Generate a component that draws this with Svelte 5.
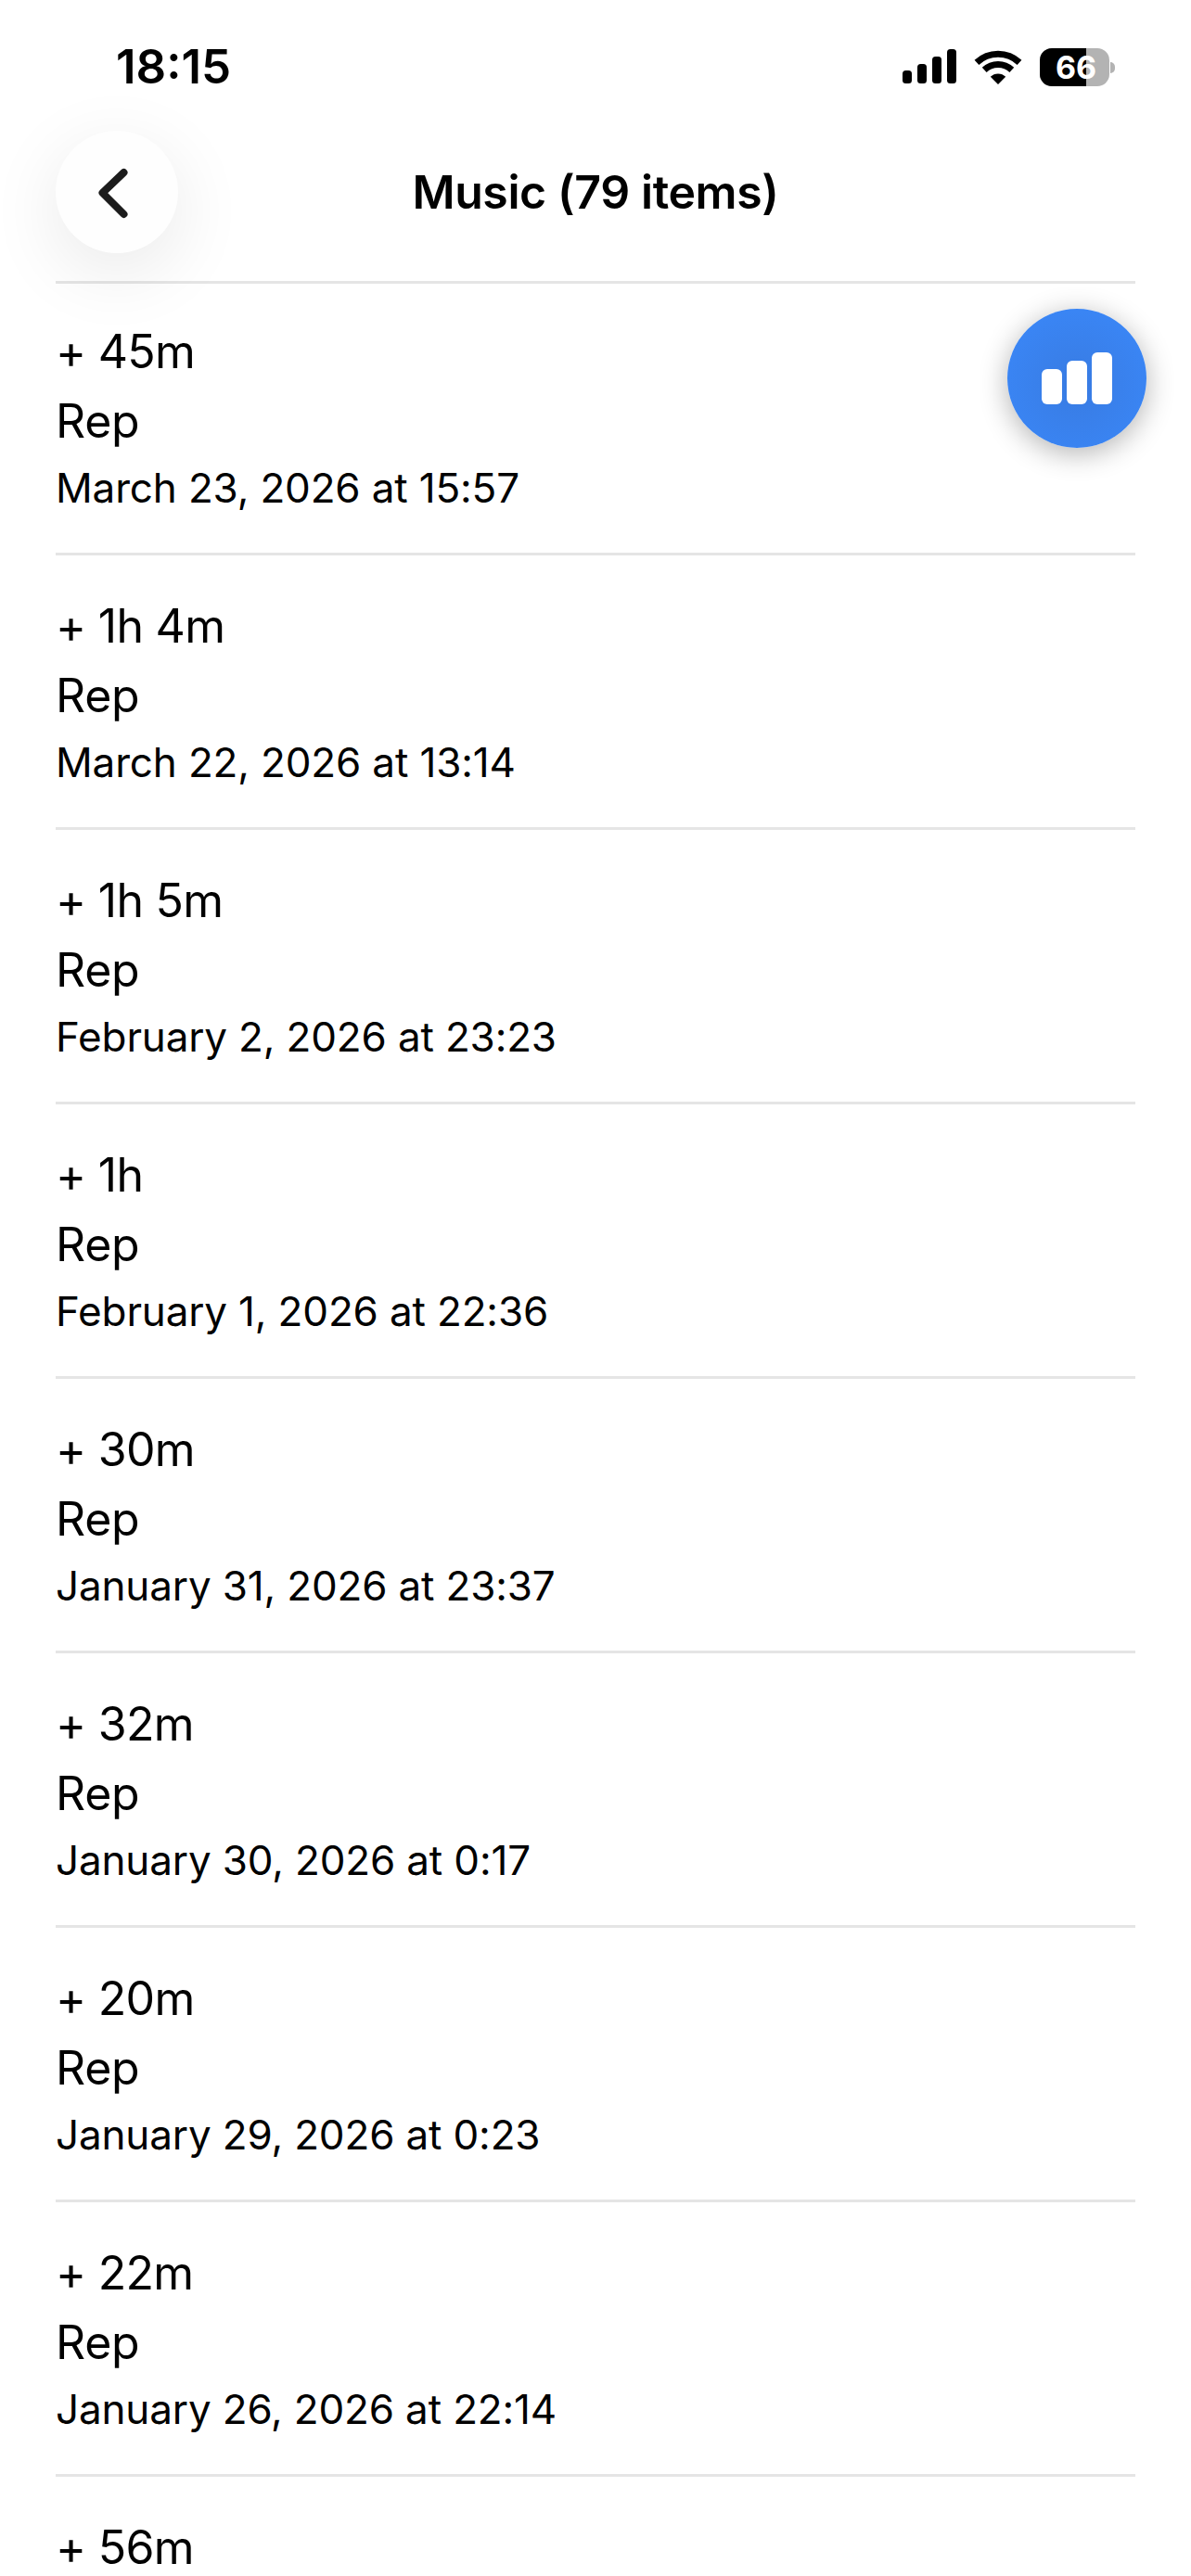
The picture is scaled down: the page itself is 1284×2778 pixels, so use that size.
<script>
  const items = [
    { amount: '+ 45m', label: 'Rep', date: 'March 23, 2026 at 15:57' },
    { amount: '+ 1h 4m', label: 'Rep', date: 'March 22, 2026 at 13:14' },
    { amount: '+ 1h 5m', label: 'Rep', date: 'February 2, 2026 at 23:23' },
    { amount: '+ 1h', label: 'Rep', date: 'February 1, 2026 at 22:36' },
    { amount: '+ 30m', label: 'Rep', date: 'January 31, 2026 at 23:37' },
    { amount: '+ 32m', label: 'Rep', date: 'January 30, 2026 at 0:17' },
    { amount: '+ 20m', label: 'Rep', date: 'January 29, 2026 at 0:23' },
    { amount: '+ 22m', label: 'Rep', date: 'January 26, 2026 at 22:14' },
    { amount: '+ 56m' }
  ];
</script>

<div class="screen">
  <header class="status">
    <span class="time">18:15</span>
    <div class="indicators">
      <svg class="signal" width="58" height="38" viewBox="0 0 58 38" aria-hidden="true">
        <rect x="0" y="23" width="10" height="14" rx="3.5" />
        <rect x="16" y="16" width="10" height="21" rx="3.5" />
        <rect x="32" y="8" width="10" height="29" rx="3.5" />
        <rect x="48" y="0" width="10" height="37" rx="3.5" />
      </svg>
      <svg class="wifi" width="52" height="38" viewBox="0 0 52 38" aria-hidden="true">
        <path d="M3 14.4 A33.5 33.5 0 0 1 49 14.4" fill="none" stroke="#000" stroke-width="7" />
        <path d="M11.2 22.4 A21.5 21.5 0 0 1 40.8 22.4" fill="none" stroke="#000" stroke-width="7" />
        <path d="M26 38 L17.8 29.8 A11.6 11.6 0 0 1 34.2 29.8 Z" />
      </svg>
      <div class="battery">
        <div class="shell"><div class="level"></div><span class="pct">66</span></div>
        <div class="nub"></div>
      </div>
    </div>
  </header>

  <nav class="nav">
    <button class="back" aria-label="Back">
      <svg width="44" height="64" viewBox="0 0 44 64" aria-hidden="true">
        <path d="M32.5 11 L9.5 33 L32.5 56" fill="none" stroke="#1c1c1c" stroke-width="8" stroke-linecap="round" stroke-linejoin="round" />
      </svg>
    </button>
    <h1>Music (79 items)</h1>
    <span></span>
  </nav>

  <main class="list">
    {#each items as item}
      <section class="row">
        <div class="amount">{item.amount}</div>
        {#if item.label}
          <div class="label">{item.label}</div>
          <div class="date">{item.date}</div>
        {/if}
      </section>
    {/each}
  </main>

  <button class="fab" aria-label="Statistics">
    <span class="bar b1"></span>
    <span class="bar b2"></span>
    <span class="bar b3"></span>
  </button>
</div>

<style>
  :global(body) {
    margin: 0;
    background: #fff;
  }
  .screen {
    position: relative;
    width: 1284px;
    height: 2778px;
    overflow: hidden;
    background: #fff;
    color: #000;
    font-family: Inter, "Liberation Sans", sans-serif;
  }
  .status {
    height: 141px;
    box-sizing: border-box;
    padding: 42px 82px 0 125px;
    display: flex;
    justify-content: space-between;
    align-items: flex-start;
  }
  .time {
    font-size: 51px;
    font-weight: 600;
    line-height: 60px;
    letter-spacing: 0;
  }
  .indicators {
    display: flex;
    align-items: flex-start;
    padding-top: 10px;
    gap: 19px;
  }
  .signal {
    margin-top: 1px;
  }
  .signal rect {
    fill: #000;
  }
  .wifi {
    margin-top: 1px;
  }
  .battery {
    display: flex;
    align-items: center;
    gap: 1px;
  }
  .shell {
    position: relative;
    width: 75px;
    height: 41px;
    border-radius: 13px;
    background: #b3b3b3;
    overflow: hidden;
  }
  .level {
    width: 50px;
    height: 100%;
    background: #000;
  }
  .pct {
    position: absolute;
    inset: 0;
    padding-left: 3px;
    text-align: center;
    color: #fff;
    font-size: 34px;
    font-weight: 700;
    line-height: 41px;
  }
  .nub {
    width: 5px;
    height: 12px;
    border-radius: 0 6px 6px 0;
    background: #b3b3b3;
  }
  .nav {
    display: grid;
    grid-template-columns: 132px 1fr 132px;
    align-items: center;
    height: 132px;
    padding: 0 60px 30px;
  }
  .back {
    width: 132px;
    height: 132px;
    border: 0;
    border-radius: 50%;
    padding: 0;
    background: #fefefe;
    box-shadow: 0 20px 80px rgba(0, 0, 0, 0.09);
    display: flex;
    align-items: center;
    justify-content: center;
  }
  .back svg {
    margin-left: -7px;
  }
  h1 {
    margin: 0;
    text-align: center;
    font-size: 50px;
    font-weight: 600;
    line-height: 60px;
    letter-spacing: -0.4px;
  }
  .list {
    margin: 0 60px;
    border-top: 3px solid #e5e5e5;
  }
  .row {
    box-sizing: border-box;
    height: 296px;
    padding-top: 46px;
    border-bottom: 3px solid #e5e5e5;
  }
  .row:first-child {
    height: 293px;
    padding-top: 43px;
  }
  .amount,
  .label {
    font-size: 50px;
    line-height: 60px;
    letter-spacing: -0.7px;
  }
  .label {
    margin-top: 15px;
    letter-spacing: -0.3px;
  }
  .date {
    margin-top: 14px;
    font-size: 44px;
    line-height: 56px;
    letter-spacing: -0.15px;
  }
  .fab {
    position: absolute;
    left: 1086px;
    top: 333px;
    width: 150px;
    height: 150px;
    border: 0;
    border-radius: 50%;
    padding: 0 0 47px 0;
    box-sizing: border-box;
    background: radial-gradient(circle at 50% 55%, #387be2, #3a85f4 72%);
    box-shadow: 0 6px 30px rgba(0, 0, 0, 0.3);
    display: flex;
    align-items: flex-end;
    justify-content: center;
    gap: 5px;
  }
  .bar {
    width: 22px;
    border-radius: 6px;
    background: #fff;
  }
  .b1 {
    height: 38px;
  }
  .b2 {
    height: 47px;
  }
  .b3 {
    height: 56px;
  }
</style>
